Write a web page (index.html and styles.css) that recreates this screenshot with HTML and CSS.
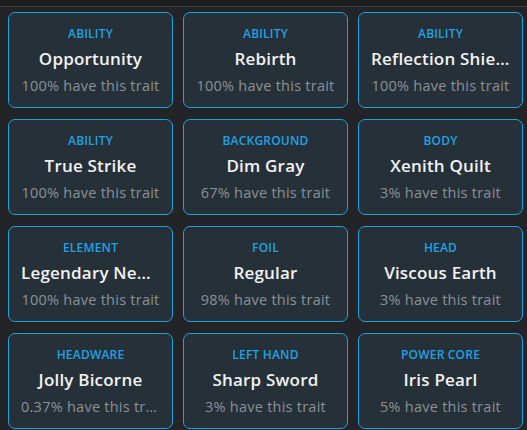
FILE: index.html
```html
<!DOCTYPE html>
<html>
<head>
<meta charset="utf-8">
<link rel="stylesheet" href="styles.css">
</head>
<body>
<div class="topbar"></div>
<div class="grid">
  <div class="card"><div class="cat">Ability</div><div class="name">Opportunity</div><div class="pct">100% have this trait</div></div>
  <div class="card"><div class="cat">Ability</div><div class="name">Rebirth</div><div class="pct">100% have this trait</div></div>
  <div class="card"><div class="cat">Ability</div><div class="name">Reflection Shield</div><div class="pct">100% have this trait</div></div>
  <div class="card"><div class="cat">Ability</div><div class="name">True Strike</div><div class="pct">100% have this trait</div></div>
  <div class="card"><div class="cat">Background</div><div class="name">Dim Gray</div><div class="pct">67% have this trait</div></div>
  <div class="card"><div class="cat">Body</div><div class="name">Xenith Quilt</div><div class="pct">3% have this trait</div></div>
  <div class="card"><div class="cat">Element</div><div class="name">Legendary Neutral</div><div class="pct">100% have this trait</div></div>
  <div class="card"><div class="cat">Foil</div><div class="name">Regular</div><div class="pct">98% have this trait</div></div>
  <div class="card"><div class="cat">Head</div><div class="name">Viscous Earth</div><div class="pct">3% have this trait</div></div>
  <div class="card"><div class="cat">Headware</div><div class="name">Jolly Bicorne</div><div class="pct">0.37% have this trait</div></div>
  <div class="card"><div class="cat">Left Hand</div><div class="name">Sharp Sword</div><div class="pct">3% have this trait</div></div>
  <div class="card"><div class="cat">Power Core</div><div class="name">Iris Pearl</div><div class="pct">5% have this trait</div></div>
</div>
</body>
</html>
```
FILE: styles.css
```css
html, body {
  margin: 0;
  padding: 0;
  background: #222427;
  font-family: "Open Sans", "Liberation Sans", sans-serif;
}
.topbar {
  height: 6px;
  background: #1d1e20;
  border-bottom: 1px solid #36383b;
}
.grid {
  display: grid;
  grid-template-columns: repeat(3, 165px);
  grid-auto-rows: 96px;
  column-gap: 10px;
  row-gap: 11px;
  padding: 5px 0 0 8px;
}
.card {
  box-sizing: border-box;
  background: #263039;
  border: 1px solid #1aa4e2;
  border-radius: 7px;
  padding: 10px 12px 8px;
  text-align: center;
  min-width: 0;
}
.cat, .name, .pct {
  white-space: nowrap;
  overflow: hidden;
  text-overflow: ellipsis;
}
.cat {
  color: #1fa3e3;
  font-size: 12px;
  font-weight: 600;
  letter-spacing: 0.2px;
  text-transform: uppercase;
  line-height: 22px;
}
.name {
  color: #f2f2f2;
  font-size: 17px;
  font-weight: 600;
  letter-spacing: 0.2px;
  line-height: 28px;
}
.pct {
  color: #8b9096;
  font-size: 14.5px;
  letter-spacing: 0.25px;
  line-height: 26px;
}
```
